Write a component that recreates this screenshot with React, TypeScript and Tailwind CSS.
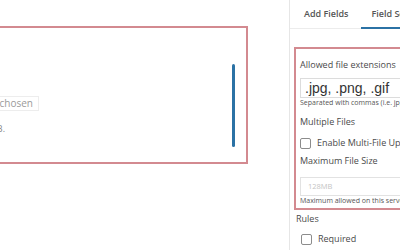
export default function App() {
  return (
    <div className="flex h-[250px] w-[400px] overflow-hidden bg-white font-['Open_Sans',sans-serif] text-[#4a4a4a]">
      {/* canvas area */}
      <div className="w-[289px] shrink-0 pt-[26px]">
        <div className="-ml-[100px] flex h-[138px] w-[348px] items-start border-2 border-[#d38a90]">
          <div className="flex flex-1 flex-col pt-[68px]">
            <div className="w-[137px] text-right text-[10px] leading-[13px]">
              <span className="inline-block whitespace-nowrap border border-[#ededed] px-[5px] align-top text-[#9a9a9a]">
                No file chosen
              </span>
            </div>
            <div className="mt-[12px] w-[103px] whitespace-nowrap text-right text-[9px] leading-[12px] text-[#8a8a8a]">
              Max. file size: 128 MB.
            </div>
          </div>
          <div className="mr-[11px] mt-[36px] h-[83px] w-[3px] rounded-full bg-[#2b72a5]" />
        </div>
      </div>

      {/* sidebar */}
      <div className="flex min-w-0 flex-1 flex-col border-l border-[#e6e6e6]">
        <div className="flex h-[29px] shrink-0 whitespace-nowrap border-b border-[#ececec] text-[9px] font-semibold text-[#555]">
          <div className="flex items-center pl-[14px] pr-[13px]">Add Fields</div>
          <div className="relative flex items-center pl-[10px] pr-[10px]">
            Field Settings
            <div className="absolute bottom-[-1px] left-0 right-0 h-[2px] bg-[#2b72a5]" />
          </div>
        </div>

        <div className="ml-[4px] mt-[18px] w-[220px] shrink-0 whitespace-nowrap border-2 border-[#d38a90] pb-[2px] pl-[4px] pt-[9px]">
          <div className="text-[9px] leading-[14px]">Allowed file extensions</div>
          <div className="mt-[6px] flex h-[20px] items-center border border-[#dcdcdc] pl-[4px] font-['Liberation_Sans',sans-serif] text-[14px] text-[#333]">
            .jpg, .png, .gif
          </div>
          <div className="text-[7px] leading-[10px] text-[#555]">Separated with commas (i.e. jpg, png, gif)</div>
          <div className="mt-[8px] text-[9px] leading-[12px]">Multiple Files</div>
          <div className="mt-[9px] flex items-center">
            <div className="h-[11px] w-[11px] rounded-[2px] border border-[#8c8c8c] bg-white" />
            <span className="ml-[6px] text-[9px] leading-[12px]">Enable Multi-File Upload</span>
          </div>
          <div className="mt-[5px] text-[9px] leading-[14px]">Maximum File Size</div>
          <div className="mt-[9px] flex h-[19px] items-center border border-[#e2e2e2] pl-[7px] text-[7.5px] text-[#c4c4c4]">
            128MB
          </div>
          <div className="text-[7px] leading-[10px] text-[#555]">Maximum allowed on this server: 128MB</div>
        </div>

        <div className="ml-[6px] mt-[2px] whitespace-nowrap">
          <div className="text-[9px] leading-[14px]">Rules</div>
          <div className="mt-[7px] flex items-center pl-[5px]">
            <div className="h-[11px] w-[11px] rounded-[2px] border border-[#8c8c8c] bg-white" />
            <span className="ml-[6px] text-[9px] leading-[12px]">Required</span>
          </div>
        </div>
      </div>
    </div>
  );
}
